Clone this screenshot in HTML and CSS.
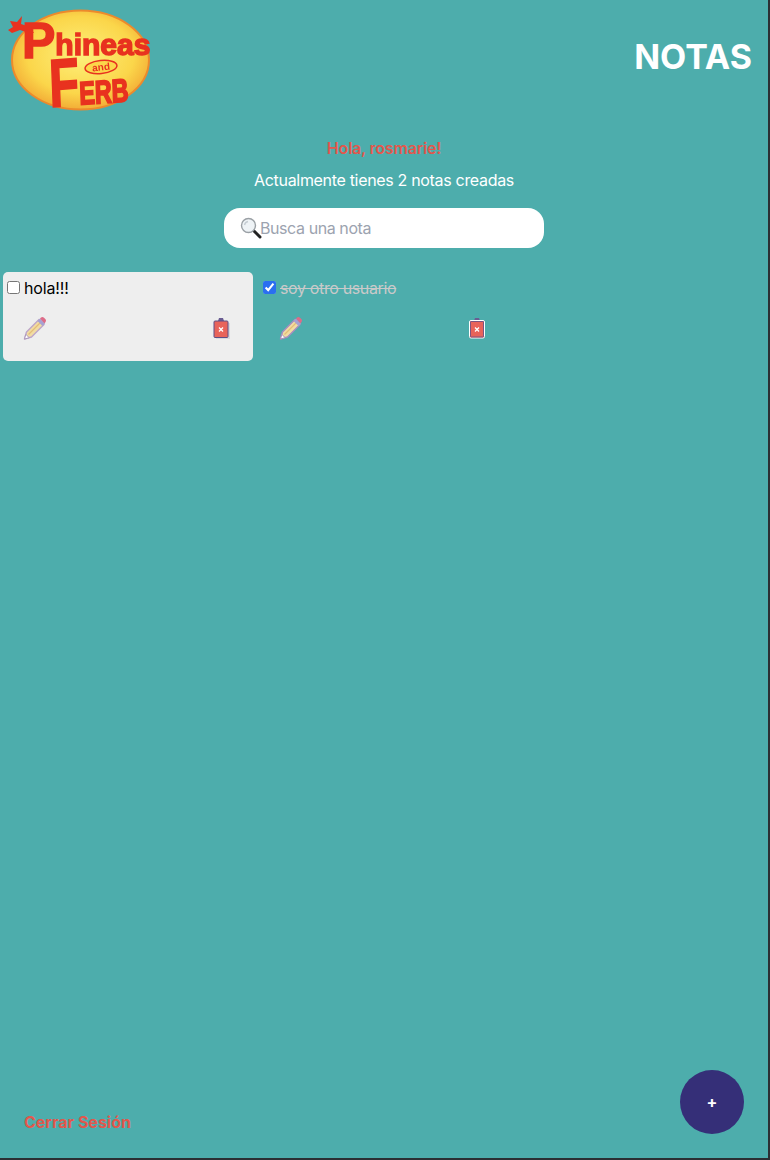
FILE: index.html
```html
<!DOCTYPE html>
<html lang="es">
<head>
<meta charset="utf-8">
<title>Notas</title>
<link rel="stylesheet" href="styles.css">
</head>
<body>
<div class="page">
  <header class="top">
    <svg class="logo" viewBox="0 0 156 130" width="156" height="130" aria-label="Phineas and Ferb">
      <defs>
        <radialGradient id="yolk" cx="50%" cy="45%" r="60%">
          <stop offset="0" stop-color="#fdf07c"/>
          <stop offset="0.65" stop-color="#fbd64a"/>
          <stop offset="1" stop-color="#f0a030"/>
        </radialGradient>
      </defs>
      <ellipse cx="80.500" cy="60" rx="68.500" ry="49.500" fill="url(#yolk)" stroke="#ec8a2c" stroke-width="2"/>
      <path d="M8 30L13 27L10 21L17 22L22 16L21 24L30 27L34 33L26 32L20 30L12 33Z" fill="#e8321f"/>
      <text class="logo-phineas" x="22" y="58"><tspan class="logo-big">P</tspan><tspan dy="-3">hineas</tspan></text>
      <ellipse cx="101" cy="67" rx="16" ry="6.500" fill="#fbd64a" stroke="#e8321f" stroke-width="1.500" transform="rotate(-6 101 67)"/>
      <text class="logo-and" x="101" y="70.500" transform="rotate(-6 101 67)">and</text>
      <text class="logo-ferb" transform="translate(50 107) scale(.9 1.250) rotate(-3)"><tspan class="logo-f">F</tspan><tspan class="logo-erb">ERB</tspan></text>
    </svg>
    <h1 class="title">NOTAS</h1>
  </header>

  <section class="intro">
    <p class="greeting">Hola, rosmarie!</p>
    <p class="count">Actualmente tienes 2 notas creadas</p>
    <div class="search">
      <svg class="search-icon" viewBox="0 0 22 22" width="22" height="22" aria-hidden="true">
        <path d="M13.500 13.500l6.500 6.500" stroke="#222" stroke-width="3" stroke-linecap="round"/>
        <circle cx="8.500" cy="8.500" r="7" fill="#eef3f6" stroke="#9aa0a5" stroke-width="1.400"/>
        <path d="M4.500 8a4.500 4.500 0 0 1 3.500-3.500" fill="none" stroke="#c6ced4" stroke-width="1.400"/>
      </svg>
      <span class="placeholder">Busca una nota</span>
    </div>
  </section>

  <main class="notes">
    <article class="note note-open">
      <label class="note-line">
        <input class="check" type="checkbox">
        <span class="note-text">hola!!!</span>
      </label>
      <div class="actions">
        <svg class="pencil" viewBox="0 0 24 24" width="24" height="24" aria-hidden="true">
          <path d="M1.500 23l2-7L16 3.500l5 5L8.500 21z" fill="#f1dca2" stroke="#bda5c9" stroke-width="1.400" stroke-linejoin="round"/>
          <path d="M5.500 18.500L17.500 6.500" stroke="#e4bd78" stroke-width="1.200"/>
          <path d="M1.500 23l1.300-4.700 3.400 3.400z" fill="#fff" stroke="#ac98bc" stroke-width="1"/>
          <path d="M14.500 5l5 5 2.500-2.500-5-5z" fill="#a6a2d2"/>
          <path d="M17 2.500l1-1c1-.7 2-.7 3 .2l1.300 1.300c.9 1 .9 2 .2 3l-1 1.500z" fill="#dd6c88"/>
        </svg>
        <svg class="trash" viewBox="0 0 20 24" width="20" height="24" aria-hidden="true">
          <path d="M17 7h2v16H5v-1.500h12z" fill="#d8d9dd"/>
          <path d="M7 5l1-3h4l1 3z" fill="#6a5d92"/>
          <rect x="3" y="5" width="14" height="16.500" rx="1" fill="#e8635a" stroke="#5d4f86" stroke-width="1"/>
          <path d="M8 11.500l4 4M12 11.500l-4 4" stroke="#fff" stroke-width="1.300"/>
        </svg>
      </div>
    </article>
    <article class="note note-done">
      <label class="note-line">
        <input class="check" type="checkbox" checked>
        <span class="note-text">soy otro usuario</span>
      </label>
      <div class="actions">
        <svg class="pencil" viewBox="0 0 24 24" width="24" height="24" aria-hidden="true">
          <path d="M1.500 23l2-7L16 3.500l5 5L8.500 21z" fill="#f1dca2" stroke="#a78cc0" stroke-width="1.400" stroke-linejoin="round"/>
          <path d="M5.500 18.500L17.500 6.500" stroke="#e4bd78" stroke-width="1.200"/>
          <path d="M1.500 23l1.300-4.700 3.400 3.400z" fill="#fff" stroke="#a58fb6" stroke-width="1"/>
          <path d="M14.500 5l5 5 2.500-2.500-5-5z" fill="#a6a2d2"/>
          <path d="M17 2.500l1-1c1-.7 2-.7 3 .2l1.300 1.300c.9 1 .9 2 .2 3l-1 1.500z" fill="#dd6c88"/>
        </svg>
        <svg class="trash" viewBox="0 0 20 24" width="20" height="24" aria-hidden="true">
          <path d="M7 5l1-3h4l1 3z" fill="#6a5d92"/>
          <rect x="2.500" y="4.500" width="15" height="17.500" rx="1.500" fill="#e8635a" stroke="#fff" stroke-width="1"/>
          <rect x="3.500" y="5.500" width="13" height="15.500" rx=".5" fill="none" stroke="#7d5480" stroke-width="1"/>
          <path d="M8 11.500l4 4M12 11.500l-4 4" stroke="#fff" stroke-width="1.300"/>
        </svg>
      </div>
    </article>
  </main>

  <footer class="bottom">
    <a class="logout" href="#">Cerrar Sesión</a>
    <button class="fab" type="button">+</button>
  </footer>
</div>
</body>
</html>
```

FILE: styles.css
```css
* { box-sizing: border-box; }
html, body { margin: 0; height: 100%; }
body {
  font-family: Inter, "Noto Sans", sans-serif;
  background: #4dadac;
}
.page {
  height: 1160px;
  display: flex;
  flex-direction: column;
  background: #4dadac;
  border-right: 2px solid #2b2f33;
  border-bottom: 2px solid #2b2f33;
}
.top {
  display: flex;
  justify-content: space-between;
  align-items: flex-start;
  height: 130px;
  padding: 0 16px 0 0;
}
.logo { display: block; filter: blur(.35px); }
.logo text {
  font-family: "Liberation Sans", sans-serif;
  font-weight: 700;
  fill: #e8321f;
  stroke: #e8321f;
}
.logo-phineas { font-size: 30px; stroke-width: 1.500px; }
.logo-big { font-size: 50px; }
.logo .logo-and { font-size: 10px; stroke-width: 0; text-anchor: middle; }
.logo-ferb { stroke-width: 1.500px; }
.logo-f { font-size: 54px; }
.logo-erb { font-size: 26px; }
.title {
  margin: 35px 0 0;
  font-size: 34px;
  line-height: 44px;
  font-weight: 700;
  color: #fff;
}
.intro {
  display: flex;
  flex-direction: column;
  align-items: center;
}
.greeting {
  margin: 8px 0 0;
  font-size: 16px;
  line-height: 20px;
  font-weight: 600;
  letter-spacing: -.2px;
  color: #e2574c;
}
.count {
  margin: 12px 0 0;
  font-size: 16px;
  line-height: 20px;
  letter-spacing: -.32px;
  color: #fff;
}
.search {
  display: flex;
  align-items: center;
  width: 320px;
  height: 40px;
  margin-top: 18px;
  padding-left: 16px;
  background: #fff;
  border-radius: 16px;
}
.search-icon { flex: none; margin-right: -2px; }
.placeholder { font-size: 16px; letter-spacing: -.42px; color: #9ca3af; }
.notes {
  display: flex;
  gap: 6px;
  margin-top: 24px;
  padding-left: 3px;
}
.note {
  width: 250px;
  height: 89px;
  padding: 6px 4px 0;
  border-radius: 5px;
}
.note-open { background: #eeeeee; color: #000; }
.note-done { color: #c9c9c9; }
.note-done .note-text { text-decoration: line-through; letter-spacing: -.36px; }
.note-open .note-text { letter-spacing: -.15px; }
.note-line {
  display: flex;
  align-items: center;
  height: 20px;
  font-size: 16px;
  line-height: 20px;
}
.check {
  width: 13px;
  height: 13px;
  margin: -1px 4px 0 0;
  accent-color: #2a6ff0;
}
.actions {
  display: flex;
  justify-content: space-between;
  align-items: center;
  margin-top: 18px;
  padding: 0 18px 0 16px;
}
.pencil, .trash { display: block; flex: none; }
.bottom {
  display: flex;
  justify-content: space-between;
  align-items: flex-end;
  margin-top: auto;
  padding: 0 24px 24px;
}
.logout {
  padding-bottom: 2px;
  font-size: 16px;
  line-height: 20px;
  font-weight: 700;
  color: #e2574c;
  text-decoration: none;
}
.fab {
  width: 64px;
  height: 64px;
  padding: 0;
  border: 0;
  border-radius: 50%;
  background: #352f78;
  color: #fff;
  font-family: Inter, sans-serif;
  font-size: 16px;
  font-weight: 700;
}
```
